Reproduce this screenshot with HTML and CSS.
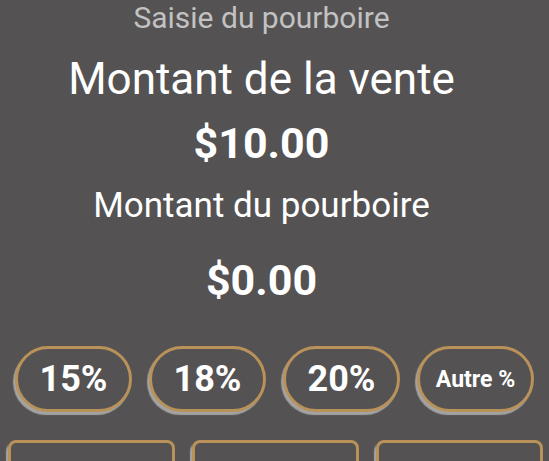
FILE: index.html
```html
<!DOCTYPE html>
<html lang="fr">
<head>
<meta charset="utf-8">
<title>Saisie du pourboire</title>
<link rel="stylesheet" href="styles.css">
</head>
<body>
<main class="screen">
  <section class="summary">
    <h1 class="title">Saisie du pourboire</h1>
    <h2 class="label label-sale">Montant de la vente</h2>
    <div class="amount amount-sale">$10.00</div>
    <h2 class="label label-tip">Montant du pourboire</h2>
    <div class="amount amount-tip">$0.00</div>
  </section>
  <div class="pills">
    <button class="pill">15%</button>
    <button class="pill">18%</button>
    <button class="pill">20%</button>
    <button class="pill pill-small">Autre %</button>
  </div>
  <div class="boxes">
    <div class="box"></div>
    <div class="box"></div>
    <div class="box"></div>
  </div>
</main>
</body>
</html>
```

FILE: styles.css
```css
html, body {
  margin: 0;
  padding: 0;
  background: #545253;
  overflow: hidden;
}
body {
  width: 549px;
  height: 461px;
  font-family: Roboto, "Liberation Sans", sans-serif;
  color: #ffffff;
}
.screen {
  display: flex;
  flex-direction: column;
}
.summary {
  width: 523px;
  display: flex;
  flex-direction: column;
  align-items: center;
}
.title {
  margin: 0;
  font-size: 30px;
  line-height: 36px;
  font-weight: 400;
  color: #c2c2c2;
}
.label {
  margin: 0;
  font-weight: 400;
}
.label-sale {
  margin-top: 16px;
  font-size: 44px;
  line-height: 54px;
}
.label-tip {
  margin-top: 16px;
  font-size: 35px;
  line-height: 42px;
}
.amount {
  font-size: 43px;
  line-height: 52px;
  font-weight: 700;
}
.amount-sale {
  margin-top: 11px;
}
.amount-tip {
  margin-top: 27px;
}
.pills {
  display: flex;
  gap: 17px;
  padding-left: 15px;
  margin-top: 40px;
}
.pill {
  box-sizing: border-box;
  width: 117px;
  height: 66px;
  border: 3px solid #b99259;
  border-radius: 33px;
  background: #545253;
  color: #ffffff;
  font-family: Roboto, "Liberation Sans", sans-serif;
  font-size: 36px;
  font-weight: 700;
  padding: 0;
  box-shadow: -2px 3px 1px #a3a3a3;
}
.pill-small {
  font-size: 23px;
}
.boxes {
  display: flex;
  gap: 17px;
  padding-left: 8px;
  margin-top: 28px;
}
.box {
  box-sizing: border-box;
  width: 167px;
  height: 80px;
  border: 3px solid #b99259;
  border-radius: 8px;
  box-shadow: -2px 3px 1px #a3a3a3;
}
```
